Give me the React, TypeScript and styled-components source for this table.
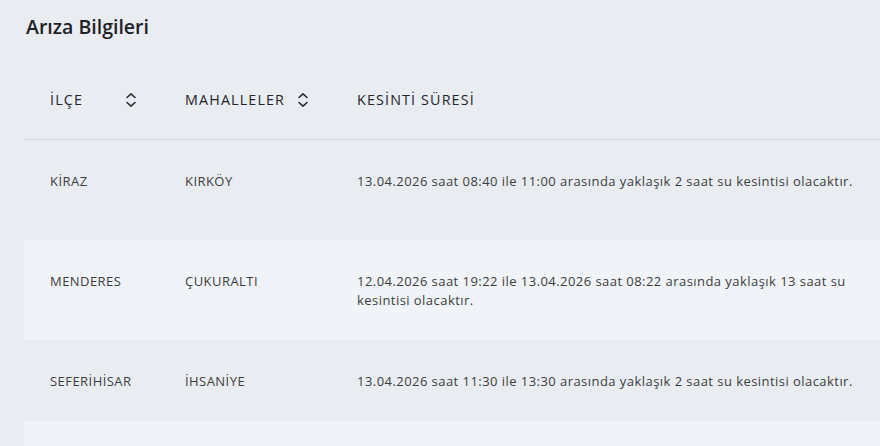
import React from "react";
import styled, { createGlobalStyle } from "styled-components";

const Global = createGlobalStyle`
  html, body { margin: 0; padding: 0; background: #e9edf2; }
  body { font-family: "Open Sans", "Noto Sans", sans-serif; color: #333; overflow: hidden; }
`;

const Page = styled.div`
  width: 880px;
  height: 446px;
  background: #e9edf2;
  overflow: hidden;
`;

const Title = styled.h2`
  margin: 0;
  padding: 14px 0 0 26px;
  font-size: 19.5px;
  font-weight: 600;
  color: #1e2126;
  line-height: 26px;
`;

const Table = styled.table`
  margin-top: 19px;
  margin-left: 24px;
  width: 856px;
  border-collapse: collapse;
  table-layout: fixed;
`;

const HeadCell = styled.th<{ $w?: number }>`
  box-sizing: border-box;
  width: ${(p) => (p.$w ? `${p.$w}px` : "auto")};
  padding: 32px 22px 30px 26px;
  text-align: left;
  font-size: 14.3px;
  font-weight: 500;
  letter-spacing: 1.15px;
  color: #22252a;
  line-height: 18px;
  border-bottom: 1px solid #d4d8dd;
`;

const HeadInner = styled.div`
  display: flex;
  align-items: center;
  justify-content: space-between;
`;

const Row = styled.tr<{ $alt?: boolean }>`
  background: ${(p) => (p.$alt ? "#f0f3f7" : "transparent")};
`;

const Cell = styled.td<{ $h: number }>`
  height: ${(p) => p.$h}px;
  box-sizing: border-box;
  padding: 32px 18px 0 26px;
  vertical-align: top;
  font-size: 13px;
  letter-spacing: 0.45px;
  line-height: 19px;
  color: #3c3d40;
`;

const SortIcon = () => (
  <svg width="12" height="16" viewBox="0 0 12 16" fill="none" stroke="#2a2d31" strokeWidth="1.6" strokeLinecap="round" strokeLinejoin="round">
    <path d="M2 5.5 L6 1.8 L10 5.5" />
    <path d="M2 10.5 L6 14.2 L10 10.5" />
  </svg>
);

const rows = [
  { ilce: "KİRAZ", mah: "KIRKÖY", desc: "13.04.2026 saat 08:40 ile 11:00 arasında yaklaşık 2 saat su kesintisi olacaktır.", h: 100 },
  { ilce: "MENDERES", mah: "ÇUKURALTI", desc: "12.04.2026 saat 19:22 ile 13.04.2026 saat 08:22 arasında yaklaşık 13 saat su kesintisi olacaktır.", h: 100 },
  { ilce: "SEFERİHİSAR", mah: "İHSANİYE", desc: "13.04.2026 saat 11:30 ile 13:30 arasında yaklaşık 2 saat su kesintisi olacaktır.", h: 82 },
  { ilce: "", mah: "", desc: "", h: 82 },
];

export default function App() {
  return (
    <Page>
      <Global />
      <Title>Arıza Bilgileri</Title>
      <Table>
        <thead>
          <tr>
            <HeadCell $w={135}>
              <HeadInner>
                <span>İLÇE</span>
                <SortIcon />
              </HeadInner>
            </HeadCell>
            <HeadCell $w={172}>
              <HeadInner>
                <span>MAHALLELER</span>
                <SortIcon />
              </HeadInner>
            </HeadCell>
            <HeadCell>
              <span>KESİNTİ SÜRESİ</span>
            </HeadCell>
          </tr>
        </thead>
        <tbody>
          {rows.map((r, i) => (
            <Row key={i} $alt={i % 2 === 1}>
              <Cell $h={r.h}>{r.ilce}</Cell>
              <Cell $h={r.h}>{r.mah}</Cell>
              <Cell $h={r.h}>{r.desc}</Cell>
            </Row>
          ))}
        </tbody>
      </Table>
    </Page>
  );
}
